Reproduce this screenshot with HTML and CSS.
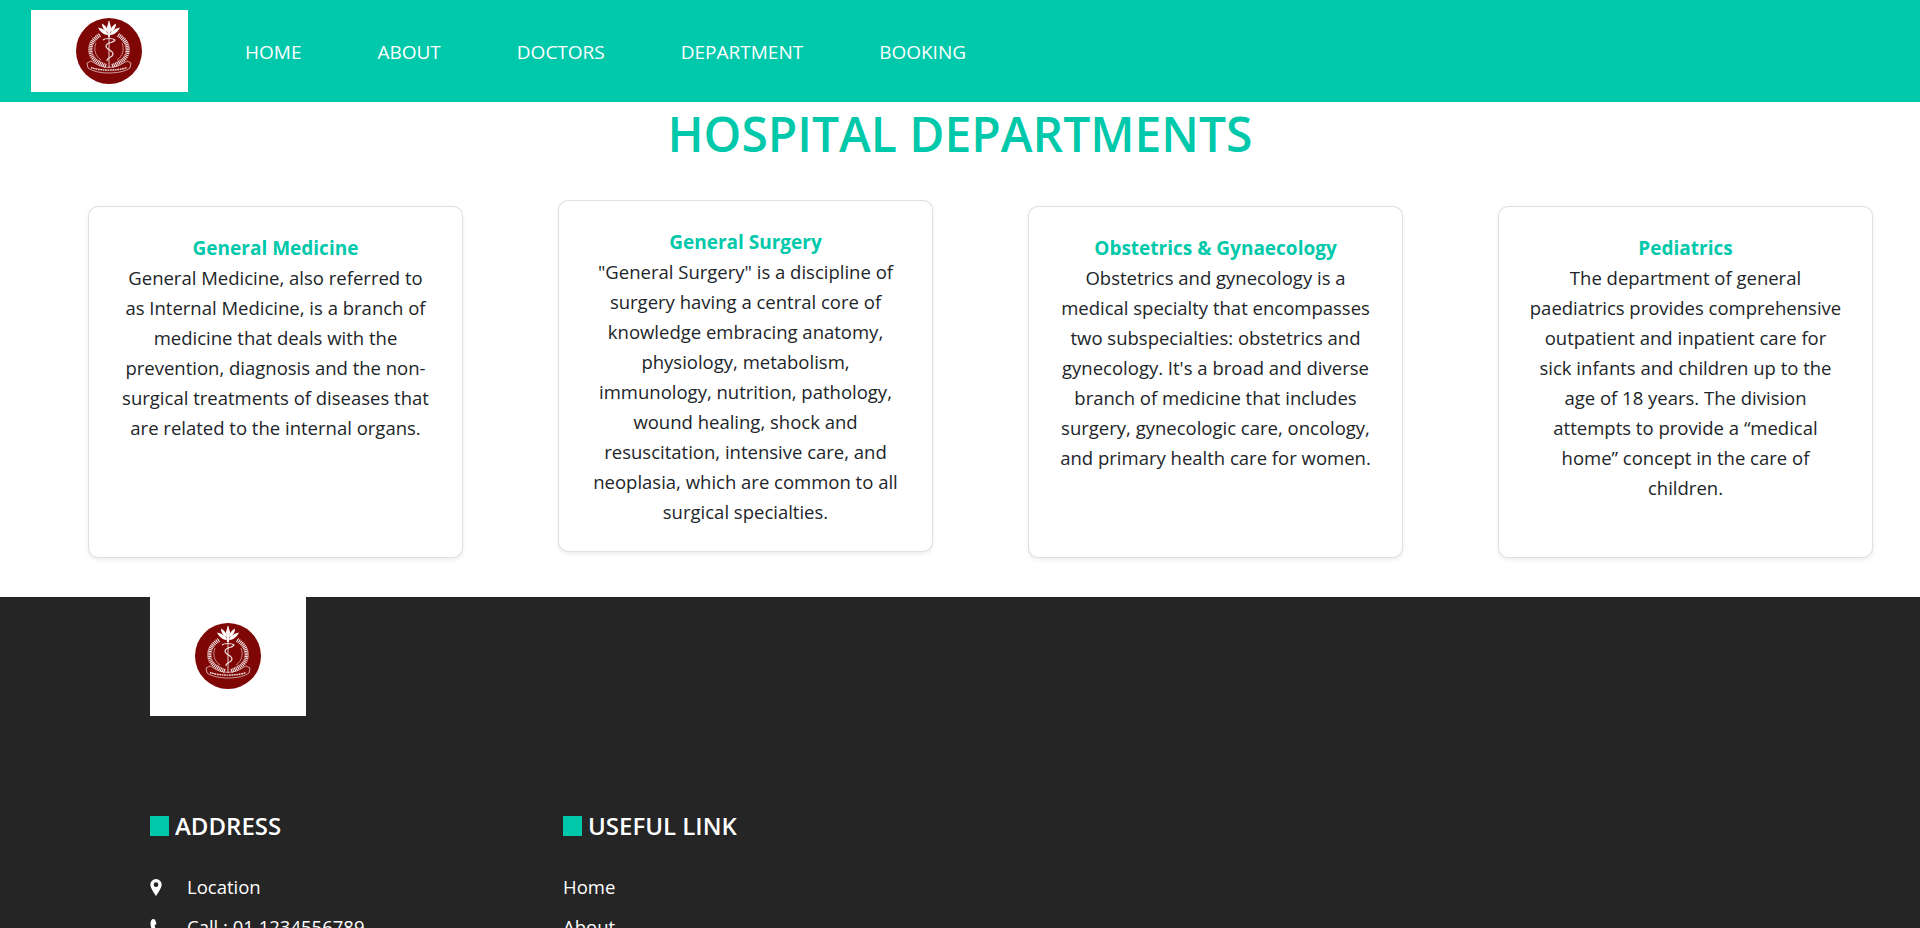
FILE: index.html
```html
<!DOCTYPE html>
<html lang="en">
<head>
<meta charset="utf-8">
<title>Hospital Departments</title>
<link rel="stylesheet" href="styles.css">
</head>
<body>
<svg class="defs" width="0" height="0" aria-hidden="true">
  <defs>
    <filter id="soft"><feGaussianBlur stdDeviation="0.3"/></filter>
    <symbol id="emblem" viewBox="0 0 66 66">
      <circle cx="33" cy="33" r="33" fill="#7e0605"/>
      <g filter="url(#soft)">
        <g fill="#fff">
          <path d="M33 2.500 35 9 34 19 32 19 31 9Z"/>
          <path d="M31.500 14C28 13 26 9 26 5.500 29 7 31.500 10 32 13Z"/>
          <path d="M34.500 14C38 13 40 9 40 5.500 37 7 34.500 10 34 13Z"/>
          <path d="M31.500 17C27 16.500 24 13.500 22 9.500 27 10.500 30.500 13 32 16Z"/>
          <path d="M34.500 17C39 16.500 42 13.500 44 9.500 39 10.500 35.500 13 34 16Z"/>
        </g>
        <g fill="none" stroke="#f3e2e2">
          <path d="M33 3V50" stroke-width=".9"/>
          <path d="M24 17C17 21 13.500 27 14.500 34 15.500 41 22 45 30 48" stroke-width="4.200" stroke-dasharray="1.100 .7"/>
          <path d="M42 17C49 21 52.500 27 51.500 34 50.500 41 44 45 36 48" stroke-width="4.200" stroke-dasharray="1.100 .7"/>
          <path d="M27 22C29 20 37 20 39 22 38 25 30 24 30 28 30 32 37 32 37 36 37 40 30 39 31 43" stroke-width="1.100"/>
          <path d="M20 25C17.500 31 19 38 25 42M46 25C48.500 31 47 38 41 42" stroke-width=".6"/>
          <path d="M11 45 15 43 22 47C28 50 38 50 44 47L51 43 55 45 54 50C50 53 42 55 33 55 24 55 16 53 12 50Z" stroke-width=".7"/>
          <path d="M15 49.500C24 53 42 53 51 49.500" stroke-width="1.400" stroke-dasharray="1.800 .6"/>
        </g>
      </g>
    </symbol>
  </defs>
</svg>

<header class="topbar">
  <a class="brand" href="#">
    <svg class="emblem" role="img" aria-label="Hospital logo"><use href="#emblem"/></svg>
  </a>
  <nav class="mainnav">
    <a href="#">HOME</a>
    <a href="#">ABOUT</a>
    <a href="#">DOCTORS</a>
    <a href="#">DEPARTMENT</a>
    <a href="#">BOOKING</a>
  </nav>
</header>

<main class="departments">
  <h1 class="page-title">HOSPITAL DEPARTMENTS</h1>
  <div class="card-row">
    <article class="card">
      <h2 class="card-title">General Medicine</h2>
      <p class="card-text">General Medicine, also referred to as Internal Medicine, is a branch of medicine that deals with the prevention, diagnosis and the non-surgical treatments of diseases that are related to the internal organs.</p>
    </article>
    <article class="card card-raised">
      <h2 class="card-title">General Surgery</h2>
      <p class="card-text">"General Surgery" is a discipline of surgery having a central core of knowledge embracing anatomy, physiology, metabolism, immunology, nutrition, pathology, wound healing, shock and resuscitation, intensive care, and neoplasia, which are common to all surgical specialties.</p>
    </article>
    <article class="card">
      <h2 class="card-title">Obstetrics &amp; Gynaecology</h2>
      <p class="card-text">Obstetrics and gynecology is a medical specialty that encompasses two subspecialties: obstetrics and gynecology. It's a broad and diverse branch of medicine that includes surgery, gynecologic care, oncology, and primary health care for women.</p>
    </article>
    <article class="card">
      <h2 class="card-title">Pediatrics</h2>
      <p class="card-text">The department of general paediatrics provides comprehensive outpatient and inpatient care for sick infants and children up to the age of 18 years. The division attempts to provide a “medical home” concept in the care of children.</p>
    </article>
  </div>
</main>

<footer class="footer">
  <a class="footer-brand" href="#">
    <svg class="emblem" role="img" aria-label="Hospital logo"><use href="#emblem"/></svg>
  </a>
  <div class="footer-cols">
    <section>
      <h3 class="footer-heading">ADDRESS</h3>
      <ul class="footer-list">
        <li class="contact">
          <svg class="ico" viewBox="0 0 12 18"><path fill="#fff" d="M6 0a6 6 0 0 0-6 6c0 3.500 6 12 6 12s6-8.500 6-12a6 6 0 0 0-6-6zm0 8.500a2.500 2.500 0 1 1 0-5 2.500 2.500 0 0 1 0 5z"/></svg>
          <span>Location</span>
        </li>
        <li class="contact">
          <svg class="ico" viewBox="0 0 12 18"><path fill="#fff" d="M2.500 0 5 .6 6.500 5 4.500 6.800C4.800 9 6 11 8 12.300L10 11l2 2.500-.6 3C10.500 17.500 9 18 7.500 17.500 3 15.500.3 10 .2 4.500.2 2.500 1 .8 2.500 0z"/></svg>
          <span>Call : 01 1234556789</span>
        </li>
      </ul>
    </section>
    <section>
      <h3 class="footer-heading">USEFUL LINK</h3>
      <ul class="footer-list">
        <li><a href="#">Home</a></li>
        <li><a href="#">About</a></li>
      </ul>
    </section>
  </div>
</footer>
</body>
</html>
```

FILE: styles.css
```css
* { box-sizing: border-box; }
html, body { margin: 0; padding: 0; }
html { overflow: hidden; height: 928px; }
body {
  font-family: "Open Sans", "Liberation Sans", sans-serif;
  font-size: 18.5px;
  line-height: 30px;
  color: #212529;
  background: #fff;
}
a { color: inherit; text-decoration: none; }
.defs { position: absolute; }
.emblem { width: 66px; height: 66px; display: block; }

.topbar {
  height: 102px;
  background: #00c8aa;
  display: flex;
  align-items: center;
  padding-left: 31px;
}
.brand {
  width: 157px;
  height: 82px;
  background: #fff;
  display: flex;
  align-items: center;
  padding-left: 45px;
}
.mainnav {
  display: flex;
  gap: 76px;
  margin-left: 57px;
  color: #fff;
  font-size: 19px;
  padding-top: 2px;
}

.departments { padding-bottom: 39px; }
.page-title {
  margin: 0;
  height: 104px;
  line-height: 64px;
  text-align: center;
  font-size: 48px;
  font-weight: 600;
  color: #00c8aa;
}
.card-row {
  display: grid;
  grid-template-columns: repeat(4, 375px);
  gap: 95px;
  padding-left: 88px;
}
.card {
  height: 352px;
  padding: 26px 29.5px 0;
  text-align: center;
  background: #fff;
  border: 1px solid rgba(0,0,0,.125);
  border-radius: 10px;
  box-shadow: 0 2px 4px rgba(0,0,0,.075);
}
.card-raised { transform: translateY(-6px); }
.card-title {
  margin: 0;
  font-size: 19px;
  line-height: 30px;
  font-weight: 700;
  color: #00c8aa;
}
.card-text { margin: 0; }

.footer {
  height: 331px;
  background: #252525;
  color: #fff;
  padding-left: 150px;
}
.footer-brand {
  width: 156px;
  height: 119px;
  background: #fff;
  display: flex;
  align-items: center;
  padding-left: 45px;
  padding-bottom: 2px;
}
.footer-cols {
  display: grid;
  grid-template-columns: 413px 413px;
  margin-top: 95px;
}
.footer-heading {
  margin: 0 0 31px;
  display: flex;
  align-items: center;
  gap: 6px;
  font-size: 24px;
  line-height: 30px;
  font-weight: 600;
}
.footer-heading::before {
  content: "";
  width: 19px;
  height: 20px;
  background: #00c8aa;
}
.footer-list {
  list-style: none;
  margin: 0;
  padding: 0;
  display: flex;
  flex-direction: column;
  gap: 10px;
}
.contact {
  display: flex;
  align-items: center;
  gap: 25px;
}
.ico { width: 12px; height: 17px; flex: none; }
```
